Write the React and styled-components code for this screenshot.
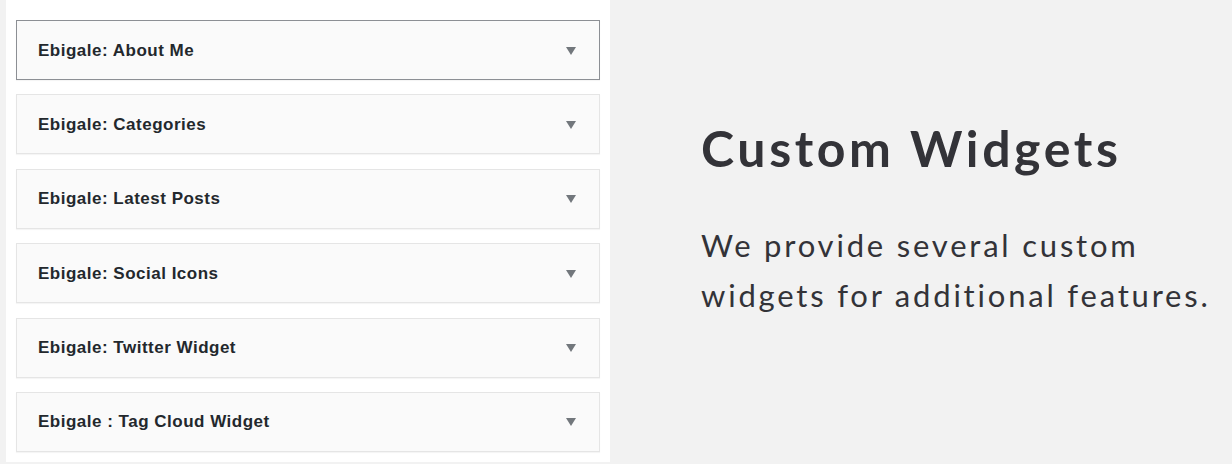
import React from "react";
import styled, { createGlobalStyle } from "styled-components";

const Global = createGlobalStyle`
  html, body { margin: 0; padding: 0; background: #f2f2f2; }
  body { width: 1232px; height: 464px; overflow: hidden; }
`;

const Page = styled.div`
  display: flex;
  width: 1232px;
  height: 464px;
  background: #f2f2f2;
`;

const Panel = styled.div`
  margin-left: 6px;
  width: 604px;
  height: 462px;
  box-sizing: border-box;
  background: #ffffff;
  padding: 20px 10px 0 10px;
  display: flex;
  flex-direction: column;
  gap: 14.4px;
`;

const WidgetBox = styled.div`
  box-sizing: border-box;
  height: 60px;
  display: flex;
  align-items: center;
  justify-content: space-between;
  padding: 1px 23px 0 21px;
  background: #fafafa;
  border: 1px solid ${(p) => (p.$active ? "#8c8f94" : "#e5e5e5")};
  box-shadow: 0 1px 1px rgba(0, 0, 0, 0.04);
`;

const WidgetTitle = styled.span`
  font-family: "Liberation Sans", Arial, sans-serif;
  font-weight: 700;
  font-size: 17px;
  letter-spacing: 0.5px;
  color: #23282d;
`;

const Arrow = styled.span`
  width: 0;
  height: 0;
  border-left: 5px solid transparent;
  border-right: 5px solid transparent;
  border-top: 8px solid #72777c;
`;

const Info = styled.div`
  flex: 1;
  padding: 118px 0 0 91px;
  display: flex;
  flex-direction: column;
`;

const Heading = styled.h2`
  margin: 0;
  font-family: Lato, "Open Sans", sans-serif;
  font-weight: 700;
  font-size: 50px;
  line-height: 60px;
  letter-spacing: 3.6px;
  color: #333338;
`;

const Text = styled.p`
  margin: 42px 0 0;
  font-family: Lato, "Open Sans", sans-serif;
  font-weight: 400;
  font-size: 31px;
  line-height: 50px;
  letter-spacing: 2.8px;
  color: #333338;
`;

const widgets = [
  "Ebigale: About Me",
  "Ebigale: Categories",
  "Ebigale: Latest Posts",
  "Ebigale: Social Icons",
  "Ebigale: Twitter Widget",
  "Ebigale : Tag Cloud Widget",
];

export default function App() {
  return (
    <Page>
      <Global />
      <Panel>
        {widgets.map((w, i) => (
          <WidgetBox key={w} $active={i === 0}>
            <WidgetTitle>{w}</WidgetTitle>
            <Arrow />
          </WidgetBox>
        ))}
      </Panel>
      <Info>
        <Heading>Custom Widgets</Heading>
        <Text>
          We provide several custom
          <br />
          widgets for additional features.
        </Text>
      </Info>
    </Page>
  );
}
